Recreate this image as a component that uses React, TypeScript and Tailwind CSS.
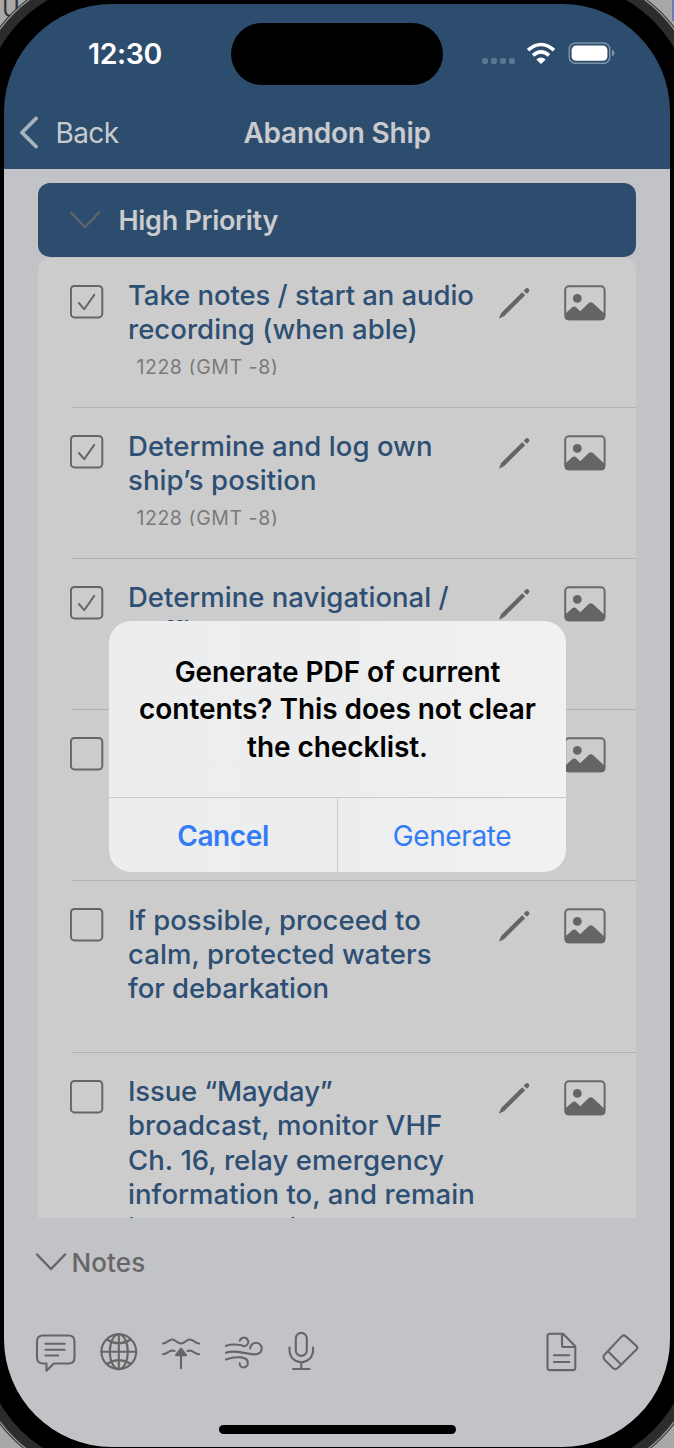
import type { ReactNode } from "react";

type Item = { lines: [string, string][]; checked?: boolean; stamp?: string; height: string; offset: string };

const items: Item[] = [
  {
    lines: [["Take notes / start an audio", "tracking-[-0.07px]"], ["recording (when able)", "tracking-[0.05px]"]],
    checked: true,
    stamp: "1228 (GMT -8)",
    height: "h-[150px]",
    offset: "pt-[20px]",
  },
  {
    lines: [["Determine and log own", "tracking-[0.05px]"], ["ship’s position", "tracking-[0.1px]"]],
    checked: true,
    stamp: "1228 (GMT -8)",
    height: "h-[151px]",
    offset: "pt-[21px]",
  },
  {
    lines: [["Determine navigational /", "tracking-[0.02px]"], ["traffic hazards", "tracking-[-0.05px]"]],
    checked: true,
    height: "h-[151px]",
    offset: "pt-[20.5px]",
  },
  { lines: [], height: "h-[171px]", offset: "pt-[21px]" },
  {
    lines: [["If possible, proceed to", "tracking-[0px]"], ["calm, protected waters", "tracking-[0.07px]"], ["for debarkation", "tracking-[-0.05px]"]],
    height: "h-[172px]",
    offset: "pt-[21.5px]",
  },
  {
    lines: [
      ["Issue “Mayday”", "tracking-[-0.15px]"],
      ["broadcast, monitor VHF", "tracking-[0.09px]"],
      ["Ch. 16, relay emergency", "tracking-[0.07px]"],
      ["information to, and remain", "tracking-[0.07px]"],
      ["in contact with CG", "tracking-[0.07px]"],
    ],
    height: "h-[220px]",
    offset: "pt-[21px]",
  },
];

function Checkbox({ checked }: { checked?: boolean }) {
  return (
    <svg width="34" height="34" viewBox="0 0 34 34" fill="none" stroke="#666666" className="mt-[27px] shrink-0">
      <rect x="0.9" y="1" width="31.4" height="31.4" rx="3.6" strokeWidth="2" />
      {checked && <path d="M8.9 18 14.2 24.2 24.2 9.9" strokeWidth="2" strokeLinecap="round" strokeLinejoin="round" />}
    </svg>
  );
}

function Pencil() {
  return (
    <svg width="34" height="34" viewBox="0 0 34 34" fill="#656565" className="mt-[28px] shrink-0">
      <path d="M1 32.3 3.2 27 24.1 6.2 27.2 9.2 6.3 30 1.4 32.6Z" />
      <path d="M25.6 4.8 27.5 2.7Q29 1.3 30.7 2.7 32.2 4.4 30.7 5.9L28.8 7.7Z" />
    </svg>
  );
}

function Picture() {
  return (
    <svg width="42" height="36" viewBox="0 0 42 36" className="mt-[27px] shrink-0">
      <rect x="1.2" y="1.3" width="39.4" height="33" rx="3.6" fill="none" stroke="#696969" strokeWidth="2" />
      <circle cx="13.3" cy="13.4" r="4.4" fill="#656565" />
      <path d="M1 28.7 8 22.6Q10.2 20.6 12.4 22.6L16.2 26.2 24.5 18.2Q26.8 16.4 29.2 18.2L41 29.2V31.7Q41 35.2 37.5 35.2H4.5Q1 35.2 1 31.7Z" fill="#656565" />
    </svg>
  );
}

function Chevron({ className = "" }: { className?: string }) {
  return (
    <svg width="32" height="20" viewBox="0 0 32 20" fill="none" stroke="currentColor" strokeWidth="2.5" strokeLinecap="round" strokeLinejoin="round" className={className}>
      <path d="M2 2.5 16 17 30 2.5" />
    </svg>
  );
}

function Tool({ width, className = "", children }: { width: number; className?: string; children: ReactNode }) {
  return (
    <svg width={width} height="44" viewBox={`0 0 ${width} 44`} fill="none" stroke="#666666" strokeWidth="2.1" strokeLinecap="round" strokeLinejoin="round" className={`shrink-0 ${className}`}>
      {children}
    </svg>
  );
}

function StatusBar() {
  return (
    <div className="flex h-[96px] items-start">
      <div className="ml-[84px] mt-[32px] w-[143px] text-[28.5px] font-semibold leading-[36px] text-white">
        <span className="tracking-[-0.4px]">12:30</span>
      </div>
      <div className="mt-[19px] h-[62px] w-[212px] rounded-full bg-black" />
      <div className="ml-[39px] mt-[54px] flex gap-[3px]">
        {[0, 1, 2, 3].map((n) => (
          <div key={n} className="size-[6px] rounded-[2px] bg-[#5c7590]" />
        ))}
      </div>
      <svg width="30" height="22" viewBox="0 0 30 22" className="ml-[11px] mt-[38px]" fill="none" stroke="white" strokeWidth="3.6">
        <path d="M2 8.2Q15-3.2 28 8.2" />
        <path d="M7 13.4Q15 6.4 23 13.4" />
        <path d="M10.3 17.4Q15 13.6 19.7 17.4L15 22Z" fill="white" stroke="none" />
      </svg>
      <svg width="47" height="22" viewBox="0 0 47 22" className="ml-[12px] mt-[38px]">
        <rect x="1.2" y="0.9" width="40.6" height="20.4" rx="6.4" fill="none" stroke="#7e92a8" strokeWidth="1.5" />
        <rect x="3.6" y="3.6" width="35.8" height="15.2" rx="4.4" fill="white" />
        <path d="M44 7.5Q46.6 8.8 46.6 11T44 14.5Z" fill="#8395aa" />
      </svg>
    </div>
  );
}

function Row({ item }: { item: Item }) {
  return (
    <div className={`${item.height} flex shrink-0 pl-[31.5px]`}>
      <Checkbox checked={item.checked} />
      <div className={`${item.offset} ml-[24.5px] w-[369.5px] text-[27.5px] font-medium leading-[34.3px] text-[#2d4f73]`}>
        {item.lines.map(([text, tracking]) => (
          <div key={text} className={`whitespace-nowrap ${tracking}`}>
            {text}
          </div>
        ))}
        {item.stamp && (
          <div className="ml-[8.5px] mt-[12.5px] flex h-[15.5px] items-center overflow-hidden text-[19.5px] font-normal tracking-[0.55px] text-[#7a7a7a]">
            {item.stamp}
          </div>
        )}
      </div>
      <Pencil />
      <div className="w-[32px] shrink-0" />
      <Picture />
    </div>
  );
}

function Alert() {
  return (
    <div className="absolute left-[105px] top-[617px] flex h-[251px] w-[457px] flex-col overflow-hidden rounded-[22px] bg-linear-to-r from-[#ecedef] via-[#eceeee] to-[#f1f1f0]">
      <div className="flex h-[176px] flex-col items-center pt-[33px] text-[28px] font-semibold leading-[37.3px] text-black">
        <div className="tracking-[-0.06px]">Generate PDF of current</div>
        <div className="tracking-[-0.07px]">contents? This does not clear</div>
        <div className="tracking-[-0.06px]">the checklist.</div>
      </div>
      <div className="flex flex-1 border-t border-[#c8c9ca] text-[28px] text-[#347bf6]">
        <div className="flex w-[229px] items-center justify-center border-r border-[#c8c9ca] pt-px font-semibold tracking-[-0.4px]">Cancel</div>
        <div className="flex flex-1 items-center justify-center pt-px tracking-[-0.4px]">Generate</div>
      </div>
    </div>
  );
}

export default function App() {
  return (
    <div className="relative h-[1448px] w-[674px] overflow-hidden bg-[#a8a8a8] p-[4px] font-['Inter',sans-serif]">
      <div className="absolute left-[2px] top-[-5px] text-[24px] leading-[28px] text-[#333333]">U</div>
      <div className="absolute right-0 top-0 h-[21px] w-[2px] bg-[#6580b8]" />
      <div className="relative h-[1443px] w-[666px] rounded-[108px] bg-black shadow-[0_0_0_21px_#000,0_0_0_30px_#2c2c2c,0_0_0_31px_#3a3a3a,0_0_0_32px_#a8a8a8,0_0_0_33px_#303030]">
        <div className="relative flex h-full flex-col overflow-hidden rounded-[108px] bg-[linear-gradient(#2d4d6e_165px,#c2c3c7_165px)]">
          <div className="h-[165px] shrink-0">
            <StatusBar />
            <div className="flex h-[65px] items-center text-[28px] text-[#c9cbce]">
              <svg width="20" height="34" viewBox="0 0 20 34" fill="none" stroke="#a9b3bf" strokeWidth="3.8" strokeLinecap="round" strokeLinejoin="round" className="ml-[15px]">
                <path d="M17 2.5 3 16.5 17 30.5" />
              </svg>
              <div className="ml-[16.5px] w-[188px] pt-px tracking-[-0.6px]">Back</div>
              <div className="whitespace-nowrap pt-px font-semibold tracking-[-0.25px]">Abandon Ship</div>
            </div>
          </div>

          <div className="ml-[34px] mt-[14px] flex h-[74px] w-[598px] shrink-0 items-center rounded-[12px] bg-[#2d4d6e] text-[#5f6468]">
            <Chevron className="ml-[31px]" />
            <div className="ml-[17.5px] pt-[2px] text-[27px] font-semibold tracking-[-0.3px] text-[#cbcccd]">High Priority</div>
          </div>

          <div className="ml-[34px] mt-px flex h-[960px] w-[598px] shrink-0 flex-col overflow-hidden rounded-t-[12px] bg-[#cccccc]">
            {items.map((item, i) => (
              <div key={i} className="shrink-0">
                <Row item={item} />
                {i < items.length - 1 && <div className="-mt-px ml-[34px] h-px bg-[#b0b0b0]" />}
              </div>
            ))}
          </div>

          <div className="mt-[30px] flex h-[28px] shrink-0 items-center pl-[31px] text-[#666666]">
            <Chevron />
            <div className="ml-[4.5px] text-[26px] font-medium tracking-[0.1px]">Notes</div>
          </div>

          <div className="mt-[54px] flex shrink-0 pl-[31px]">
            <Tool width={41}>
              <path d="M8 5.5H33.5Q39.5 5.5 39.5 11.5V27.5Q39.5 33.5 33.5 33.5H18.8L11.5 40.7V33.5H8Q2 33.5 2 27.5V11.5Q2 5.5 8 5.5Z" />
              <path d="M10.5 13.8H29.7M10.5 19.7H29.7M10.5 25.5H23.2" />
            </Tool>
            <Tool width={38} className="ml-[24px]">
              <circle cx="18.8" cy="21.7" r="17.4" />
              <ellipse cx="18.8" cy="21.7" rx="9" ry="17.4" />
              <path d="M18.8 4.3V39.1M1.4 21.7H36.2M6.8 9.5Q18.8 17 30.8 9.5M6.8 33.9Q18.8 26.4 30.8 33.9" />
            </Tool>
            <Tool width={38} className="ml-[24px]">
              <path d="M0.9 13.5C5 13.5 6.5 9.5 10.2 9.5S15 13.5 19 13.5 24 9.5 27.8 9.5 33 13.5 37.1 13.5" />
              <path d="M0.9 24.3C5 24.3 6.5 20.5 10.2 20.5L12.5 21M25.5 21 27.8 20.5C31.5 20.5 33 24.3 37.1 24.3M19 25V38.2" />
              <path d="M19 18.6 14 25.2H24Z" fill="#666666" />
            </Tool>
            <Tool width={38} className="ml-[25px]">
              <path d="M0.9 15.9C6 13.7 11 14.4 16 15A4.3 4.3 0 1 0 14.8 10.7" />
              <path d="M0.9 22.7C11 18.8 21 25 31 24.3A5.8 5.8 0 1 0 25.2 18.5" />
              <path d="M0.9 29.5C7 27.3 11 27 16 27.4C21 28 23 30.5 22.8 33.5A4 4 0 0 1 14.7 33.3" />
            </Tool>
            <Tool width={27} className="ml-[25px]">
              <rect x="7.8" y="2.9" width="11" height="23" rx="5.5" />
              <path d="M1.5 17.5V19.5C1.5 36.5 25.1 36.5 25.1 19.5V17.5M13.3 32.5V39M5 39H21.5" />
            </Tool>
            <Tool width={31} className="ml-[230.5px]">
              <path d="M4 3.7H17L29.3 16.2V37.7Q29.3 40.1 27 40.1H4Q1.5 40.1 1.5 37.7V6.2Q1.5 3.7 4 3.7Z" />
              <path d="M16 4.2V15.2Q16 17 18 17H29M8 25.3H23.3M8 32H23.3" />
            </Tool>
            <Tool width={37} className="ml-[25.5px]">
              <path d="M19.7 6.4Q21.8 4.3 23.9 6.4L34.5 16Q36.3 17.8 34.5 19.6L15.8 38Q13.3 40.3 10.8 38L2.5 29.7Q0.5 27.3 2.5 24.7ZM6.2 21.5 19 34.4" />
            </Tool>
          </div>
          <div className="ml-[215px] mt-[51px] h-[9px] w-[237px] shrink-0 rounded-full bg-black" />
          <Alert />
        </div>
      </div>
    </div>
  );
}
